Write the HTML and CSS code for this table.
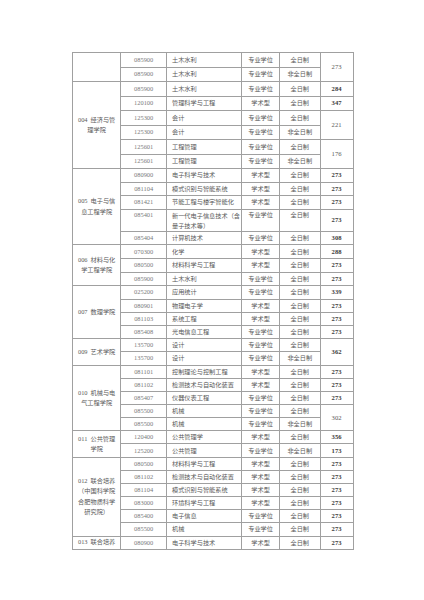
FILE: index.html
```html
<!DOCTYPE html>
<html lang="zh">
<head>
<meta charset="utf-8">
<title>招生专业表</title>
<link rel="stylesheet" href="styles.css">
</head>
<body>
<div class="page">
<table class="grid">
<colgroup>
<col class="c1"><col class="c2"><col class="c3"><col class="c4"><col class="c5"><col class="c6">
</colgroup>
<tbody>
<tr class="ha"><td class="dept" rowspan="2"></td><td class="code">085900</td><td class="name">土木水利</td><td class="ctr">专业学位</td><td class="ctr">全日制</td><td class="score" rowspan="2">273</td></tr>
<tr class="ha"><td class="code">085900</td><td class="name">土木水利</td><td class="ctr">专业学位</td><td class="ctr">非全日制</td></tr>

<tr class="ha"><td class="dept" rowspan="6"><span class="no">004</span>经济与管<br>理学院</td><td class="code">085900</td><td class="name">土木水利</td><td class="ctr">专业学位</td><td class="ctr">全日制</td><td class="score b">284</td></tr>
<tr class="ha"><td class="code">120100</td><td class="name">管理科学与工程</td><td class="ctr">学术型</td><td class="ctr">全日制</td><td class="score b">347</td></tr>
<tr class="ha"><td class="code">125300</td><td class="name">会计</td><td class="ctr">专业学位</td><td class="ctr">全日制</td><td class="score" rowspan="2">221</td></tr>
<tr class="ha"><td class="code">125300</td><td class="name">会计</td><td class="ctr">专业学位</td><td class="ctr">非全日制</td></tr>
<tr class="ha"><td class="code">125601</td><td class="name">工程管理</td><td class="ctr">专业学位</td><td class="ctr">全日制</td><td class="score" rowspan="2">176</td></tr>
<tr class="ha"><td class="code">125601</td><td class="name">工程管理</td><td class="ctr">专业学位</td><td class="ctr">非全日制</td></tr>

<tr class="hb"><td class="dept" rowspan="5"><span class="no">005</span>电子与信<br>息工程学院</td><td class="code">080900</td><td class="name">电子科学与技术</td><td class="ctr">学术型</td><td class="ctr">全日制</td><td class="score b">273</td></tr>
<tr class="hb"><td class="code">081104</td><td class="name">模式识别与智能系统</td><td class="ctr">学术型</td><td class="ctr">全日制</td><td class="score b">273</td></tr>
<tr class="hb"><td class="code">081421</td><td class="name">节能工程与楼宇智能化</td><td class="ctr">学术型</td><td class="ctr">全日制</td><td class="score b">273</td></tr>
<tr class="hd top"><td class="code">085401</td><td class="name wrap">新一代电子信息技术（含<br>量子技术等）</td><td class="ctr">专业学位</td><td class="ctr">全日制</td><td class="score b mid">273</td></tr>
<tr class="hb"><td class="code">085404</td><td class="name">计算机技术</td><td class="ctr">专业学位</td><td class="ctr">全日制</td><td class="score b">308</td></tr>

<tr class="hb"><td class="dept" rowspan="3"><span class="no">006</span>材料与化<br>学工程学院</td><td class="code">070300</td><td class="name">化学</td><td class="ctr">学术型</td><td class="ctr">全日制</td><td class="score b">288</td></tr>
<tr class="hb"><td class="code">080500</td><td class="name">材料科学与工程</td><td class="ctr">学术型</td><td class="ctr">全日制</td><td class="score b">273</td></tr>
<tr class="hb"><td class="code">085900</td><td class="name">土木水利</td><td class="ctr">专业学位</td><td class="ctr">全日制</td><td class="score b">273</td></tr>

<tr class="hb"><td class="dept" rowspan="4"><span class="no">007</span>数理学院</td><td class="code">025200</td><td class="name">应用统计</td><td class="ctr">专业学位</td><td class="ctr">全日制</td><td class="score b">339</td></tr>
<tr class="hc"><td class="code">080901</td><td class="name">物理电子学</td><td class="ctr">学术型</td><td class="ctr">全日制</td><td class="score b">273</td></tr>
<tr class="hc"><td class="code">081103</td><td class="name">系统工程</td><td class="ctr">学术型</td><td class="ctr">全日制</td><td class="score b">273</td></tr>
<tr class="hc"><td class="code">085408</td><td class="name">光电信息工程</td><td class="ctr">专业学位</td><td class="ctr">全日制</td><td class="score b">273</td></tr>

<tr class="hc"><td class="dept" rowspan="2"><span class="no">009</span>艺术学院</td><td class="code">135700</td><td class="name">设计</td><td class="ctr">专业学位</td><td class="ctr">全日制</td><td class="score b" rowspan="2">362</td></tr>
<tr class="hc"><td class="code">135700</td><td class="name">设计</td><td class="ctr">专业学位</td><td class="ctr">非全日制</td></tr>

<tr class="hc"><td class="dept" rowspan="5"><span class="no">010</span>机械与电<br>气工程学院</td><td class="code">081101</td><td class="name">控制理论与控制工程</td><td class="ctr">学术型</td><td class="ctr">全日制</td><td class="score b">273</td></tr>
<tr class="hc"><td class="code">081102</td><td class="name">检测技术与自动化装置</td><td class="ctr">学术型</td><td class="ctr">全日制</td><td class="score b">273</td></tr>
<tr class="hc"><td class="code">085407</td><td class="name">仪器仪表工程</td><td class="ctr">专业学位</td><td class="ctr">全日制</td><td class="score b">273</td></tr>
<tr class="hc"><td class="code">085500</td><td class="name">机械</td><td class="ctr">专业学位</td><td class="ctr">全日制</td><td class="score" rowspan="2">302</td></tr>
<tr class="hc"><td class="code">085500</td><td class="name">机械</td><td class="ctr">专业学位</td><td class="ctr">非全日制</td></tr>

<tr class="hc"><td class="dept" rowspan="2"><span class="no">011</span>公共管理<br>学院</td><td class="code">120400</td><td class="name">公共管理学</td><td class="ctr">学术型</td><td class="ctr">全日制</td><td class="score b">356</td></tr>
<tr class="hc"><td class="code">125200</td><td class="name">公共管理</td><td class="ctr">专业学位</td><td class="ctr">非全日制</td><td class="score b">173</td></tr>

<tr class="hc"><td class="dept" rowspan="6"><span class="no">012</span>联合培养<br>（中国科学院<br>合肥物质科学<br>研究院）</td><td class="code">080500</td><td class="name">材料科学与工程</td><td class="ctr">学术型</td><td class="ctr">全日制</td><td class="score b">273</td></tr>
<tr class="hc"><td class="code">081102</td><td class="name">检测技术与自动化装置</td><td class="ctr">学术型</td><td class="ctr">全日制</td><td class="score b">273</td></tr>
<tr class="hc"><td class="code">081104</td><td class="name">模式识别与智能系统</td><td class="ctr">学术型</td><td class="ctr">全日制</td><td class="score b">273</td></tr>
<tr class="hc"><td class="code">083000</td><td class="name">环境科学与工程</td><td class="ctr">学术型</td><td class="ctr">全日制</td><td class="score b">273</td></tr>
<tr class="hc"><td class="code">085400</td><td class="name">电子信息</td><td class="ctr">专业学位</td><td class="ctr">全日制</td><td class="score b">273</td></tr>
<tr class="hc"><td class="code">085500</td><td class="name">机械</td><td class="ctr">专业学位</td><td class="ctr">全日制</td><td class="score b">273</td></tr>

<tr class="hc"><td class="dept"><span class="no">013</span>联合培养</td><td class="code">080900</td><td class="name">电子科学与技术</td><td class="ctr">学术型</td><td class="ctr">全日制</td><td class="score b">273</td></tr>
</tbody>
</table>
</div>
</body>
</html>
```

FILE: styles.css
```css
html, body {
  margin: 0;
  padding: 0;
  background: #ffffff;
}

.page {
  padding: 52px 0 0 72px;
}

.grid {
  border-collapse: collapse;
  table-layout: fixed;
  width: 281px;
  font-family: "Liberation Serif", "Noto Sans CJK SC", serif;
  font-size: 6.2px;
  color: #555555;
  border: 1px solid #8e8e8e;
}

.c1 { width: 48.3px; }
.c2 { width: 45.7px; }
.c3 { width: 75.3px; }
.c4 { width: 37.7px; }
.c5 { width: 40.6px; }
.c6 { width: 33px; }

.grid td {
  border: 1px solid #a0a0a0;
  padding: 0;
  line-height: 8px;
  vertical-align: middle;
  text-align: center;
  white-space: nowrap;
  overflow: hidden;
}

.ha { height: 14.5px; }
.hb { height: 13.6px; }
.hc { height: 13.16px; }
.hd { height: 21.3px; }

.grid td.dept {
  line-height: 10.4px;
  color: #5a5a5a;
}

.no {
  margin-right: 3px;
  font-size: 6.4px;
}

.grid td.code {
  color: #7a7a7a;
  font-size: 6.4px;
}

.grid td.name {
  text-align: left;
  padding-left: 5px;
  font-family: "Noto Sans CJK SC", sans-serif;
  color: #585858;
}

.grid td.ctr {
  font-family: "Noto Sans CJK SC", sans-serif;
  color: #585858;
}

.grid td.wrap {
  line-height: 10px;
}

.top td {
  vertical-align: top;
  padding-top: 1px;
}

.grid td.score {
  font-size: 6.6px;
  color: #5a5a5a;
}

.grid td.b {
  font-weight: bold;
  color: #3c3c3c;
}

.grid .top td.mid {
  vertical-align: middle;
  padding-top: 0;
}
```
